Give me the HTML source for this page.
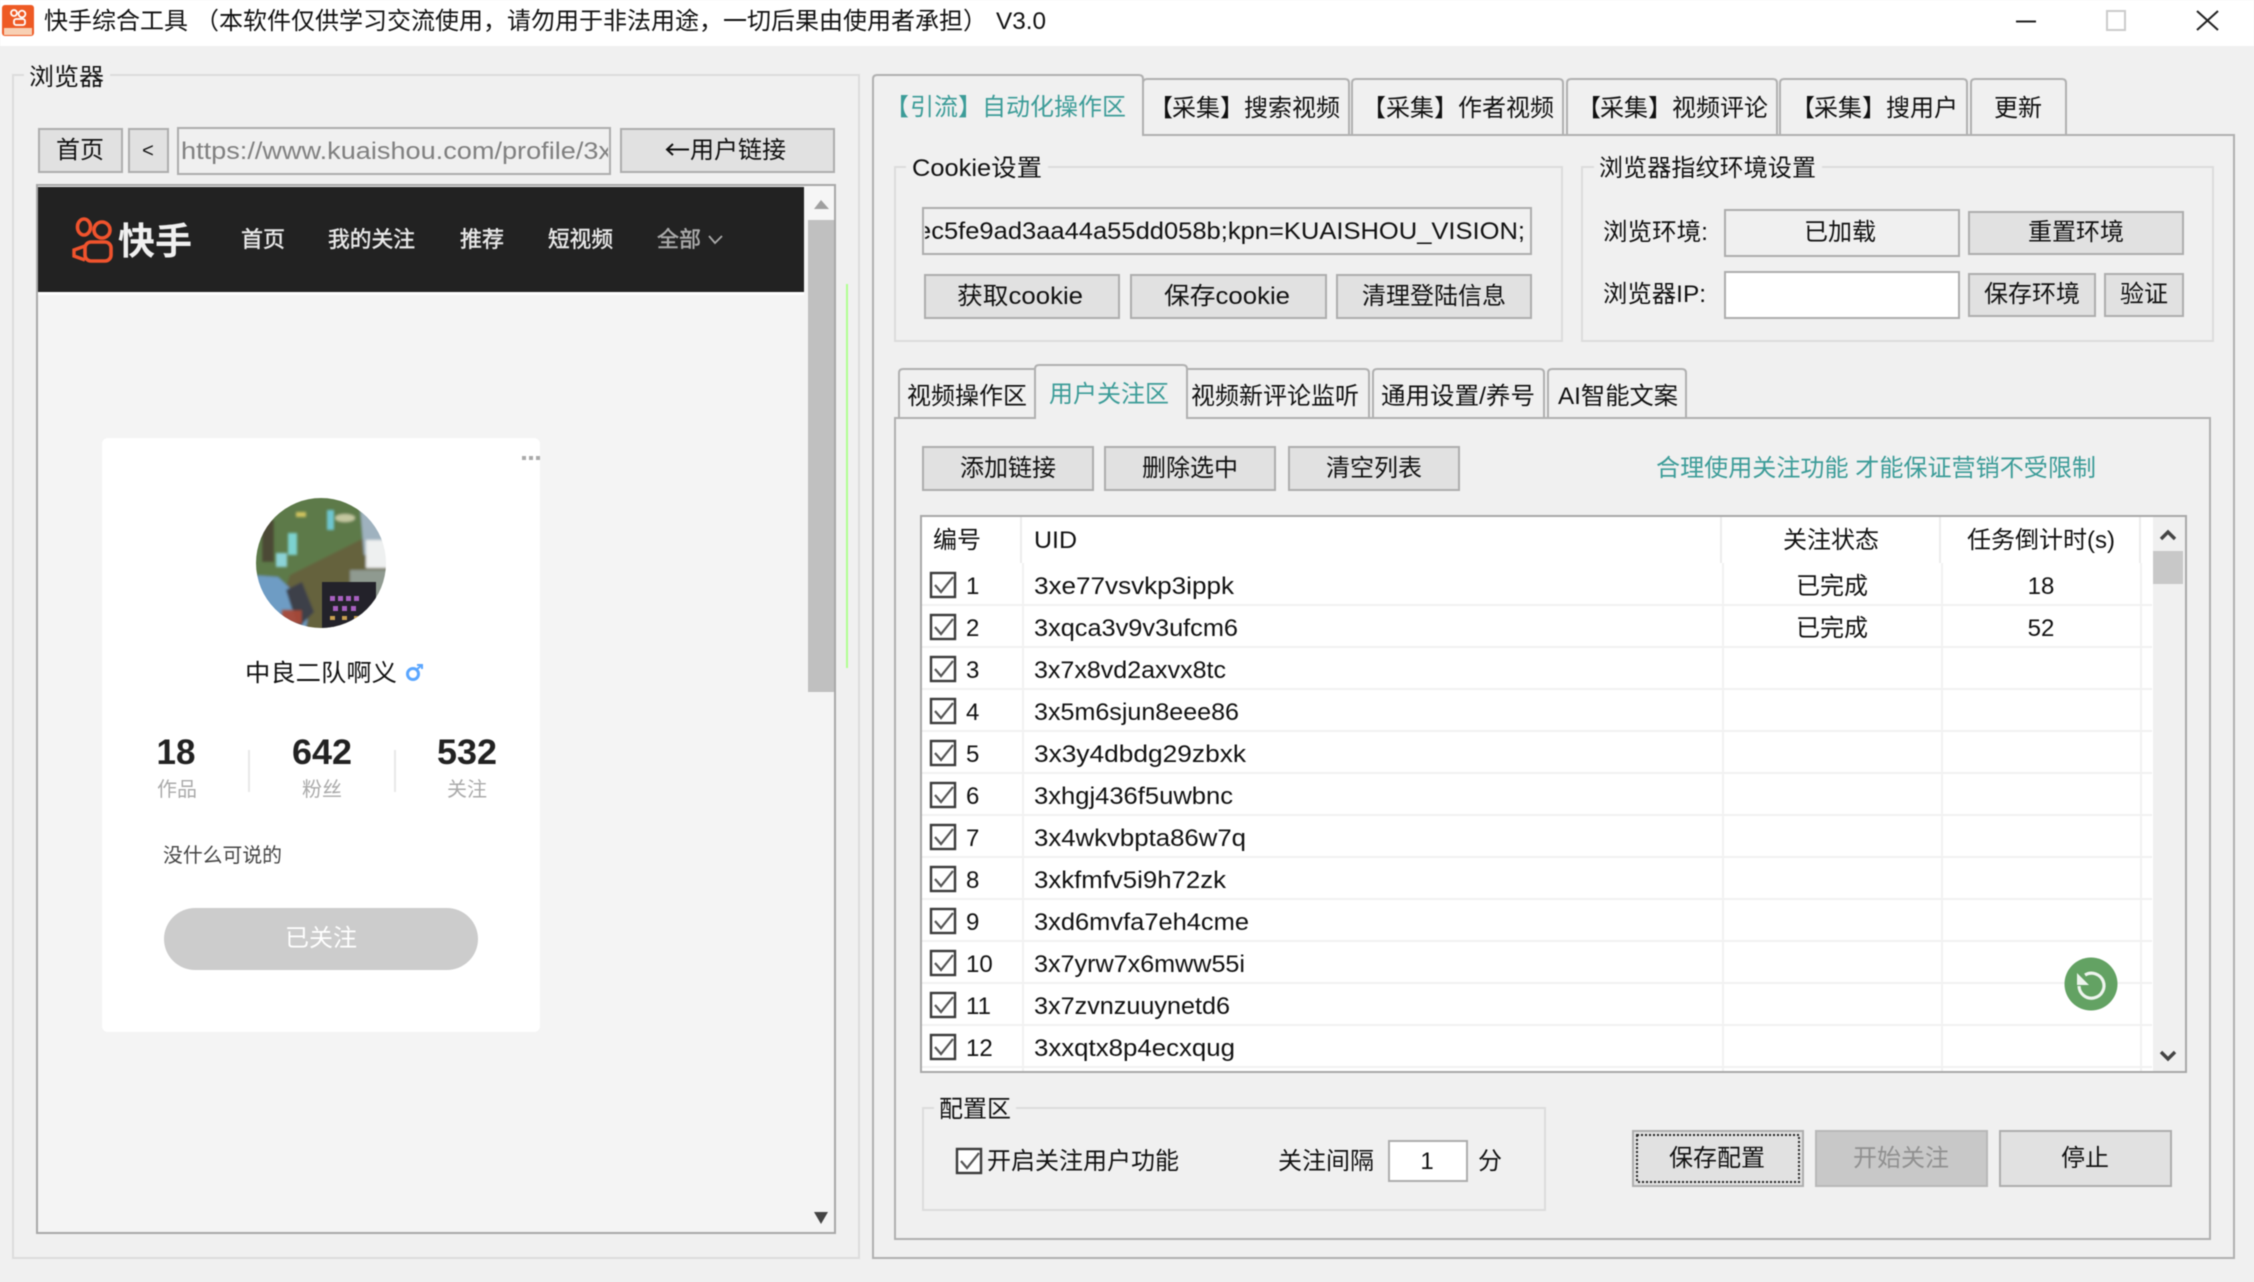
<!DOCTYPE html>
<html lang="zh-CN">
<head>
<meta charset="utf-8">
<title>快手综合工具</title>
<style>
html,body{margin:0;padding:0;background:#f0f0f0;width:2254px;height:1282px;overflow:hidden}
svg{display:block;filter:blur(.4px)}
text{font-family:"Liberation Sans","Noto Sans CJK SC",sans-serif;font-size:24px;fill:#111}
.m{text-anchor:middle}
.teal{fill:#3c9c98}
.btn{fill:#e1e1e1;stroke:#adadad;stroke-width:2}
.grp{fill:none;stroke:#dcdcdc;stroke-width:2}
.tab{fill:#f0f0f0;stroke:#b0b0b0;stroke-width:2}
.nav{font-size:22px;fill:#e8e8e8;stroke:#e8e8e8;stroke-width:.5px}
.lab{font-size:20px;fill:#aaa}
.num{font-size:35px;font-weight:bold;fill:#222}
</style>
</head>
<body>
<svg width="2254" height="1282" viewBox="0 0 2254 1282" xmlns="http://www.w3.org/2000/svg">
<defs>
<clipPath id="av"><circle cx="321" cy="563" r="65"/></clipPath>
<clipPath id="ck"><rect x="925" y="208" width="604" height="45"/></clipPath>
<clipPath id="urlc"><rect x="179" y="129" width="429" height="43"/></clipPath>
<filter id="soft" x="-5%" y="-5%" width="110%" height="110%"><feGaussianBlur stdDeviation="1.3"/></filter>
<g id="cb"><rect x="1" y="1" width="24" height="24" fill="#fff" stroke="#3a3a3a" stroke-width="2.4"/><path d="M5 13l6 7L23 5" fill="none" stroke="#555" stroke-width="2.2"/></g>
</defs>

<!-- title bar -->
<rect x="0" y="0" width="2254" height="46" fill="#fff"/>
<rect x="2" y="5" width="32" height="31" rx="3" fill="#ee5a24"/>
<rect x="4" y="28" width="28" height="7" fill="#f8d0b4"/>
<g fill="none" stroke="#fff" stroke-width="1.8"><circle cx="14" cy="13" r="3"/><circle cx="22" cy="14" r="3.4"/><rect x="14" y="19" width="11" height="6" rx="2"/></g>

<text x="44" y="29">快手综合工具</text>
<text x="195" y="29">（本软件仅供学习交流使用，请勿用于非法用途，一切后果由使用者承担）</text>
<text x="996" y="29" textLength="50" lengthAdjust="spacingAndGlyphs">V3.0</text>
<path d="M2016 21.5h20" stroke="#222" stroke-width="2"/>
<rect x="2107" y="11" width="18" height="19" fill="none" stroke="#ccc" stroke-width="2"/>
<path d="M2197 11l21 19M2218 11l-21 19" stroke="#222" stroke-width="2" fill="none"/>

<!-- left browser group -->
<rect class="grp" x="13" y="75" width="846" height="1183"/>
<rect x="24" y="62" width="86" height="28" fill="#f0f0f0"/>
<text x="29" y="85" textLength="75" lengthAdjust="spacingAndGlyphs">浏览器</text>

<rect class="btn" x="39" y="129" width="83" height="43"/>
<text class="m" x="80" y="158">首页</text>
<rect class="btn" x="129" y="129" width="39" height="43"/>
<text class="m" x="148" y="157" style="font-size:20px">&lt;</text>
<rect x="178" y="128" width="432" height="46" fill="#f0f0f0" stroke="#adadad" stroke-width="2"/>
<g clip-path="url(#urlc)"><text x="181" y="159" style="fill:#808080" textLength="431" lengthAdjust="spacingAndGlyphs">https://www.kuaishou.com/profile/3x</text></g>
<rect class="btn" x="621" y="129" width="213" height="43"/>
<path d="M667 149.5h22M673 144l-6 5.5 6 5.5" fill="none" stroke="#111" stroke-width="2"/>
<text x="690" y="158" textLength="96" lengthAdjust="spacingAndGlyphs">用户链接</text>

<!-- browser viewport -->
<rect x="37" y="185" width="798" height="1048" fill="#f4f4f4" stroke="#a8a8a8" stroke-width="2"/>
<rect x="38" y="187" width="766" height="105" fill="#222"/>
<rect x="38" y="292" width="766" height="3" fill="#fff"/>
<rect x="805" y="186" width="29" height="34" fill="#f6f6f6"/>
<path d="M814 209l7-9 8 9z" fill="#a0a0a0"/>
<rect x="808" y="220" width="26" height="472" fill="#c0c0c0"/>
<path d="M814 1212h14l-7 12z" fill="#444"/>
<rect x="846" y="284" width="2" height="384" fill="#b0ff90"/>

<!-- kuaishou logo -->
<g fill="none" stroke="#f0532d" stroke-width="3.6">
<ellipse cx="84" cy="227" rx="6.5" ry="8"/>
<circle cx="102" cy="230" r="8"/>
<rect x="85" y="242" width="26" height="19" rx="6"/>
</g>
<path d="M85 246l-11 4v6l11 4" fill="none" stroke="#f0532d" stroke-width="3.4"/>
<text x="118" y="254" textLength="74" lengthAdjust="spacingAndGlyphs" style="font-size:37px;font-weight:bold;fill:#f0f0f0">快手</text>
<text class="nav" x="241" y="247" textLength="44" lengthAdjust="spacingAndGlyphs">首页</text>
<text class="nav" x="328" y="247" textLength="87" lengthAdjust="spacingAndGlyphs">我的关注</text>
<text class="nav" x="460" y="247" textLength="44" lengthAdjust="spacingAndGlyphs">推荐</text>
<text class="nav" x="548" y="247" textLength="65" lengthAdjust="spacingAndGlyphs">短视频</text>
<text class="nav" x="657" y="247" textLength="44" lengthAdjust="spacingAndGlyphs" style="fill:#aaa;stroke:#aaa">全部</text>
<path d="M709 236l6 7 7-7" fill="none" stroke="#aaa" stroke-width="1.8"/>

<!-- profile card -->
<rect x="102" y="438" width="438" height="594" rx="6" fill="#fff"/>
<g fill="#aaa"><rect x="522" y="456" width="4" height="4"/><rect x="529" y="456" width="4" height="4"/><rect x="536" y="456" width="4" height="4"/></g>
<g clip-path="url(#av)">
<g filter="url(#soft)">
<rect x="250" y="490" width="142" height="145" fill="#5d7a48"/>
<path d="M290 575l90-45 15 25v80H270z" fill="#65623e"/>
<path d="M250 575l28 2 32 30-6 30h-54z" fill="#6e9cc4"/>
<path d="M262 520h12v42h-12z" fill="#4c4a36"/>
<path d="M360 505l30 20v30h-26z" fill="#9fb2bf"/>
<rect x="366" y="540" width="24" height="28" fill="#eef0f0"/>
<path d="M350 570h40v60h-40z" fill="#8f9a90"/>
<path d="M286 590l16-8 12 30-16 16z" fill="#3c4048"/>
<ellipse cx="345" cy="518" rx="10" ry="4" fill="#c4c8a0"/>
</g>
<rect x="322" y="582" width="54" height="48" fill="#23222a"/>
<g fill="#a860c0"><rect x="330" y="596" width="5" height="5"/><rect x="338" y="596" width="5" height="5"/><rect x="346" y="596" width="5" height="5"/><rect x="354" y="596" width="5" height="5"/><rect x="333" y="606" width="5" height="5"/><rect x="342" y="606" width="5" height="5"/><rect x="351" y="606" width="5" height="5"/></g>
<g fill="#c8a050"><rect x="330" y="616" width="5" height="4"/><rect x="342" y="616" width="5" height="4"/><rect x="354" y="616" width="5" height="4"/></g>
<g filter="url(#soft)" opacity=".95">
<rect x="288" y="533" width="9" height="22" fill="#7fd8d8"/>
<rect x="327" y="510" width="7" height="20" fill="#6fcbd8"/>
<rect x="276" y="553" width="11" height="14" fill="#90d8e0"/>
<rect x="296" y="512" width="10" height="5" fill="#d8c860"/>
<rect x="282" y="610" width="20" height="14" fill="#a84838"/>
</g>
</g>
<text x="245" y="681" textLength="152" lengthAdjust="spacingAndGlyphs">中良二队啊义</text>
<circle cx="413" cy="674" r="5.5" fill="none" stroke="#5aa6ff" stroke-width="3"/>
<path d="M416 670l6-5m-5 0h5v4" fill="none" stroke="#5aa6ff" stroke-width="2"/>
<text class="m num" x="176" y="764">18</text>
<text class="m num" x="322" y="764" textLength="60" lengthAdjust="spacingAndGlyphs">642</text>
<text class="m num" x="467" y="764" textLength="60" lengthAdjust="spacingAndGlyphs">532</text>
<text class="m lab" x="177" y="796">作品</text>
<text class="m lab" x="322" y="796">粉丝</text>
<text class="m lab" x="467" y="796">关注</text>
<path d="M249 750v42M395 750v42" stroke="#e8e8e8" stroke-width="2"/>
<text x="163" y="862" style="font-size:20px;fill:#444" textLength="119" lengthAdjust="spacingAndGlyphs">没什么可说的</text>
<rect x="164" y="908" width="314" height="62" rx="31" fill="#ccc"/>
<text class="m" x="321" y="946" style="fill:#fff">已关注</text>

<!-- right tab control -->
<rect class="tab" x="873" y="135" width="1361" height="1123"/>
<path class="tab" d="M1143 135V83q0-4 4-4h198q4 0 4 4v52z"/>
<path class="tab" d="M1352 135V83q0-4 4-4h203q4 0 4 4v52z"/>
<path class="tab" d="M1567 135V83q0-4 4-4h202q4 0 4 4v52z"/>
<path class="tab" d="M1780 135V83q0-4 4-4h179q4 0 4 4v52z"/>
<path class="tab" d="M1971 135V83q0-4 4-4h87q4 0 4 4v52z"/>
<path class="tab" d="M873 136V79q0-4 4-4h262q4 0 4 4v57"/>
<rect x="874" y="132" width="268" height="6" fill="#f0f0f0"/>
<text class="teal" x="885" y="115">【</text><text class="teal" x="910" y="115">引流】自动化操作区</text>
<text x="1149" y="116">【</text><text x="1172" y="116">采集】搜索视频</text>
<text x="1362" y="116">【</text><text x="1386" y="116">采集】作者视频</text>
<text x="1577" y="116">【</text><text x="1600" y="116">采集】视频评论</text>
<text x="1791" y="116">【</text><text x="1814" y="116">采集】搜用户</text>
<text x="1994" y="116">更新</text>

<!-- cookie group -->
<rect class="grp" x="895" y="167" width="667" height="174"/>
<rect x="906" y="155" width="142" height="26" fill="#f0f0f0"/>
<text x="912" y="176" textLength="130" lengthAdjust="spacingAndGlyphs">Cookie设置</text>
<rect x="923" y="208" width="608" height="46" fill="#f0f0f0" stroke="#adadad" stroke-width="2"/>
<g clip-path="url(#ck)"><text x="917" y="239" textLength="608" lengthAdjust="spacingAndGlyphs">ec5fe9ad3aa44a55dd058b;kpn=KUAISHOU_VISION;</text></g>
<rect class="btn" x="925" y="275" width="194" height="43"/>
<text x="957" y="304" textLength="126" lengthAdjust="spacingAndGlyphs">获取cookie</text>
<rect class="btn" x="1131" y="275" width="195" height="43"/>
<text x="1164" y="304" textLength="126" lengthAdjust="spacingAndGlyphs">保存cookie</text>
<rect class="btn" x="1337" y="275" width="194" height="43"/>
<text x="1362" y="304">清理登陆信息</text>

<!-- fingerprint group -->
<rect class="grp" x="1582" y="167" width="631" height="174"/>
<rect x="1594" y="155" width="228" height="26" fill="#f0f0f0"/>
<text x="1599" y="176" textLength="217">浏览器指纹环境设置</text>
<text x="1603" y="240" textLength="105" lengthAdjust="spacingAndGlyphs">浏览环境:</text>
<rect x="1725" y="210" width="234" height="46" fill="#f0f0f0" stroke="#adadad" stroke-width="2"/>
<text class="m" x="1840" y="240">已加载</text>
<rect class="btn" x="1969" y="212" width="214" height="42"/>
<text class="m" x="2076" y="240">重置环境</text>
<text x="1603" y="302" textLength="103" lengthAdjust="spacingAndGlyphs">浏览器IP:</text>
<rect x="1725" y="272" width="234" height="46" fill="#fff" stroke="#adadad" stroke-width="2"/>
<rect class="btn" x="1969" y="274" width="126" height="42"/>
<text class="m" x="2032" y="302">保存环境</text>
<rect class="btn" x="2105" y="274" width="78" height="42"/>
<text class="m" x="2144" y="302">验证</text>

<!-- inner tabs -->
<rect class="tab" x="895" y="418" width="1315" height="821"/>
<path class="tab" d="M899 418V373q0-4 4-4h132v49z"/>
<path class="tab" d="M1187 418V369h178q4 0 4 4v45z"/>
<path class="tab" d="M1373 418V373q0-4 4-4h163q4 0 4 4v45z"/>
<path class="tab" d="M1548 418V373q0-4 4-4h130q4 0 4 4v45z"/>
<path class="tab" d="M1035 419V369q0-4 4-4h144q4 0 4 4v50"/>
<rect x="1036" y="415" width="150" height="6" fill="#f0f0f0"/>
<text x="907" y="404">视频操作区</text>
<text class="teal" x="1049" y="402">用户关注区</text>
<text x="1191" y="404">视频新评论监听</text>
<text x="1381" y="404" textLength="154" lengthAdjust="spacingAndGlyphs">通用设置/养号</text>
<text x="1558" y="404" textLength="120" lengthAdjust="spacingAndGlyphs">AI智能文案</text>

<rect class="btn" x="923" y="447" width="170" height="43"/>
<text class="m" x="1008" y="476">添加链接</text>
<rect class="btn" x="1105" y="447" width="170" height="43"/>
<text class="m" x="1190" y="476">删除选中</text>
<rect class="btn" x="1289" y="447" width="170" height="43"/>
<text class="m" x="1374" y="476">清空列表</text>
<text class="teal" x="1656" y="476" textLength="440" lengthAdjust="spacingAndGlyphs">合理使用关注功能 才能保证营销不受限制</text>

<!-- table -->
<rect x="921" y="516" width="1265" height="556" fill="#fff" stroke="#a8a8a8" stroke-width="2"/>
<path d="M1021 517v46M1721 517v46M1940 517v46M2140 517v46" stroke="#ececec" stroke-width="2"/>
<path d="M1023 563v508M1723 563v508M1942 563v508M2141 563v508M922 605h1230M922 647h1230M922 689h1230M922 731h1230M922 773h1230M922 815h1230M922 857h1230M922 899h1230M922 941h1230M922 983h1230M922 1025h1230M922 1067h1230" stroke="#f1f1f1" stroke-width="2" fill="none"/>
<rect x="2153" y="517" width="32" height="554" fill="#f0f0f0"/>
<rect x="2153" y="551" width="30" height="33" fill="#c8c8c8"/>
<path d="M2161 539l7-7 7 7" fill="none" stroke="#444" stroke-width="3.4"/>
<path d="M2161 1052l7 7 7-7" fill="none" stroke="#444" stroke-width="3.4"/>

<text x="933" y="548">编号</text>
<text x="1034" y="548" textLength="43" lengthAdjust="spacingAndGlyphs">UID</text>
<text x="1783" y="548">关注状态</text>
<text x="1967" y="548" textLength="148" lengthAdjust="spacingAndGlyphs">任务倒计时(s)</text>

<use href="#cb" x="930" y="572"/><use href="#cb" x="930" y="614"/><use href="#cb" x="930" y="656"/><use href="#cb" x="930" y="698"/><use href="#cb" x="930" y="740"/><use href="#cb" x="930" y="782"/><use href="#cb" x="930" y="824"/><use href="#cb" x="930" y="866"/><use href="#cb" x="930" y="908"/><use href="#cb" x="930" y="950"/><use href="#cb" x="930" y="992"/><use href="#cb" x="930" y="1034"/>

<text x="966" y="594">1</text><text x="966" y="636">2</text><text x="966" y="678">3</text><text x="966" y="720">4</text><text x="966" y="762">5</text><text x="966" y="804">6</text><text x="966" y="846">7</text><text x="966" y="888">8</text><text x="966" y="930">9</text><text x="966" y="972">10</text><text x="966" y="1014">11</text><text x="966" y="1056">12</text>

<text x="1034" y="594" textLength="200" lengthAdjust="spacingAndGlyphs">3xe77vsvkp3ippk</text>
<text x="1034" y="636" textLength="204" lengthAdjust="spacingAndGlyphs">3xqca3v9v3ufcm6</text>
<text x="1034" y="678" textLength="192" lengthAdjust="spacingAndGlyphs">3x7x8vd2axvx8tc</text>
<text x="1034" y="720" textLength="205" lengthAdjust="spacingAndGlyphs">3x5m6sjun8eee86</text>
<text x="1034" y="762" textLength="212" lengthAdjust="spacingAndGlyphs">3x3y4dbdg29zbxk</text>
<text x="1034" y="804" textLength="199" lengthAdjust="spacingAndGlyphs">3xhgj436f5uwbnc</text>
<text x="1034" y="846" textLength="212" lengthAdjust="spacingAndGlyphs">3x4wkvbpta86w7q</text>
<text x="1034" y="888" textLength="192" lengthAdjust="spacingAndGlyphs">3xkfmfv5i9h72zk</text>
<text x="1034" y="930" textLength="215" lengthAdjust="spacingAndGlyphs">3xd6mvfa7eh4cme</text>
<text x="1034" y="972" textLength="211" lengthAdjust="spacingAndGlyphs">3x7yrw7x6mww55i</text>
<text x="1034" y="1014" textLength="196" lengthAdjust="spacingAndGlyphs">3x7zvnzuuynetd6</text>
<text x="1034" y="1056" textLength="201" lengthAdjust="spacingAndGlyphs">3xxqtx8p4ecxqug</text>

<text class="m" x="1832" y="594">已完成</text>
<text class="m" x="1832" y="636">已完成</text>
<text class="m" x="2041" y="594">18</text>
<text class="m" x="2041" y="636">52</text>

<!-- green refresh -->
<circle cx="2091" cy="984" r="26.5" fill="#63a263"/>
<path d="M2085 975a12.5 12.5 0 1 1-6 11" fill="none" stroke="#eef4ee" stroke-width="3.2"/>
<path d="M2077 973v12h12z" fill="#eef4ee"/>

<!-- config group -->
<rect class="grp" x="923" y="1108" width="622" height="102"/>
<rect x="934" y="1096" width="82" height="26" fill="#f0f0f0"/>
<text x="939" y="1117" textLength="72" lengthAdjust="spacingAndGlyphs">配置区</text>
<use href="#cb" x="956" y="1148"/>
<text x="987" y="1169">开启关注用户功能</text>
<text x="1278" y="1169">关注间隔</text>
<rect x="1389" y="1141" width="78" height="40" fill="#fff" stroke="#adadad" stroke-width="2"/>
<text class="m" x="1427" y="1169">1</text>
<text x="1478" y="1169">分</text>

<!-- bottom buttons -->
<rect class="btn" x="1633" y="1131" width="170" height="55"/>
<rect x="1637" y="1135" width="162" height="47" fill="none" stroke="#222" stroke-width="2" stroke-dasharray="2 2"/>
<text class="m" x="1717" y="1166">保存配置</text>
<rect x="1816" y="1131" width="171" height="55" fill="#c8c8c8" stroke="#b8b8b8" stroke-width="2"/>
<text class="m" x="1901" y="1166" style="fill:#909090">开始关注</text>
<rect class="btn" x="2000" y="1131" width="171" height="55"/>
<text class="m" x="2085" y="1166">停止</text>
</svg>
</body>
</html>
